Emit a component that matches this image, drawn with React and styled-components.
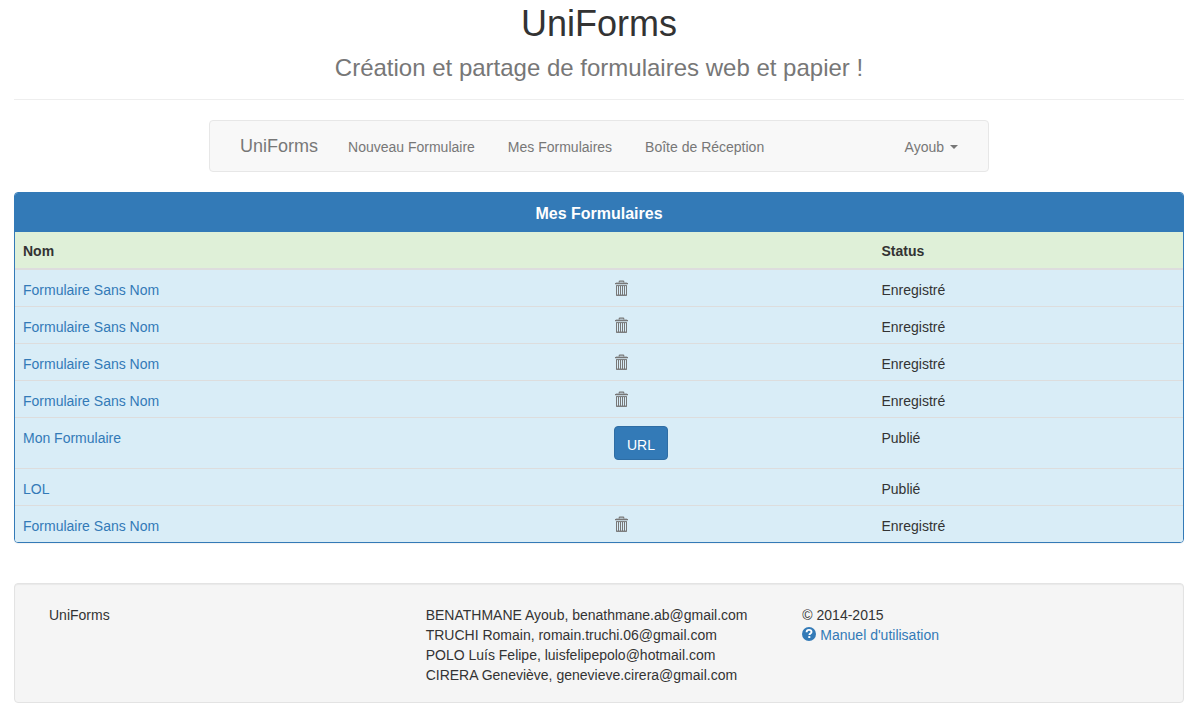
import React from "react";
import styled, { createGlobalStyle } from "styled-components";

const blue = "#337ab7";

const GlobalStyle = createGlobalStyle`
  *, *::before, *::after { box-sizing: border-box; }
  body {
    margin: 0;
    background: #fff;
    color: #333;
    font-family: "Liberation Sans", Arial, sans-serif;
    font-size: 14px;
    line-height: 20px;
  }
  button { font: inherit; cursor: pointer; }
`;

const Page = styled.div`
  padding: 4px 10px 0 14px;
`;

const Header = styled.header`
  display: flex;
  flex-direction: column;
  align-items: center;
  padding-bottom: 18px;
  margin-bottom: 20px;
  border-bottom: 1px solid #eee;
  text-align: center;
`;

const Title = styled.h1`
  margin: 0;
  font-size: 36px;
  line-height: 40px;
  font-weight: 500;
`;

const Subtitle = styled.p`
  margin: 11px 0 0;
  color: #777;
  font-size: 24px;
  line-height: 26px;
`;

const Navbar = styled.nav`
  display: flex;
  align-items: center;
  width: calc(100% * 2 / 3);
  min-height: 52px;
  margin: 0 auto 20px;
  padding: 0 15px;
  background: #f8f8f8;
  border: 1px solid #e7e7e7;
  border-radius: 4px;
`;

const Brand = styled.a`
  padding: 15px;
  color: #777;
  font-size: 18px;
  text-decoration: none;
`;

const NavLinks = styled.div`
  display: flex;
  flex: 1;
  gap: 3px;
`;

const NavLink = styled.a`
  padding: 16px 15px 14px;
  color: #777;
  text-decoration: none;
`;

const UserMenu = styled.button`
  display: flex;
  align-items: center;
  gap: 6px;
  padding: 16px 15px 14px;
  color: #777;
  background: none;
  border: 0;
`;

const Caret = styled.span`
  border-top: 4px solid #777;
  border-left: 4px solid transparent;
  border-right: 4px solid transparent;
`;

const Panel = styled.section`
  margin-bottom: 40px;
  overflow: hidden;
  border: 1px solid ${blue};
  border-radius: 4px;
  box-shadow: 0 1px 1px rgba(0, 0, 0, 0.05);
`;

const PanelTitle = styled.h2`
  margin: 0;
  padding: 11px 15px 9px;
  color: #fff;
  background: ${blue};
  font-size: 16px;
  line-height: 19px;
  font-weight: 700;
  text-align: center;
`;

const Table = styled.table`
  width: 100%;
  table-layout: fixed;
  border-collapse: separate;
  border-spacing: 0;
  background: #d9edf7;
`;

const HeadCell = styled.th`
  width: ${(p) => p.$width};
  padding: 9px 8px 7px;
  background: #dff0d8;
  border-bottom: 2px solid #ddd;
  text-align: left;
`;

const Cell = styled.td`
  height: 37px;
  padding: ${(p) => (p.$control ? "8px" : "10px 8px 6px")};
  border-top: 1px solid #ddd;
  vertical-align: top;
  tr:first-child > & { height: 36px; border-top: 0; }
`;

const Link = styled.a`
  color: ${blue};
  text-decoration: none;
`;

const UrlButton = styled.button`
  display: block;
  padding: 8px 12px 4px;
  color: #fff;
  background: ${blue};
  border: 1px solid #2e6da4;
  border-radius: 4px;
`;

const TrashButton = styled.button`
  display: flex;
  padding: 2px 0;
  color: #777;
  background: none;
  border: 0;
`;

const Footer = styled.footer`
  display: grid;
  grid-template-columns: repeat(3, 1fr);
  padding: 21px 19px 17px;
  background: #f5f5f5;
  border: 1px solid #e3e3e3;
  border-radius: 4px;
  box-shadow: inset 0 1px 1px rgba(0, 0, 0, 0.05);
`;

const FooterColumn = styled.div`
  padding: 0 15px;
`;

const HelpLink = styled(Link)`
  display: flex;
  gap: 4px;
`;

const TrashIcon = () => (
  <svg width="15" height="16" viewBox="0 0 15 16" fill="none" stroke="currentColor" aria-hidden="true">
    <path d="M5.2 2.6V1.9Q5.2 1.2 5.9 1.2h3.2q.7 0 .7.7v.7" strokeWidth="1.2" />
    <path d="M1 3.6h13" strokeWidth="1.3" />
    <path d="M2 2.9h11" strokeWidth=".6" />
    <path d="M2.2 5.6h10.6" strokeWidth="1" />
    <path d="M2.2 15.2h10.6" strokeWidth="1" />
    <path d="M2.5 5.5v9.8h10V5.5M4.5 6v9M6.5 6v9M8.5 6v9M10.5 6v9" strokeWidth="1" />
  </svg>
);

const HelpIcon = () => (
  <svg width="14" height="18" viewBox="0 0 14 18" fill="none" aria-hidden="true">
    <circle cx="7" cy="9" r="7" fill="currentColor" />
    <path d="M4.6 7.3C4.6 5.7 5.6 4.9 7 4.9s2.5.8 2.5 2c0 1.7-2.1 1.6-2.1 3.2" stroke="#fff" strokeWidth="1.9" />
    <path d="M6.3 11.1h2v1.9h-2z" fill="#fff" />
  </svg>
);

const forms = [
  { name: "Formulaire Sans Nom", status: "Enregistré" },
  { name: "Formulaire Sans Nom", status: "Enregistré" },
  { name: "Formulaire Sans Nom", status: "Enregistré" },
  { name: "Formulaire Sans Nom", status: "Enregistré" },
  { name: "Mon Formulaire", status: "Publié", url: true },
  { name: "LOL", status: "Publié" },
  { name: "Formulaire Sans Nom", status: "Enregistré" },
];

export default function App() {
  return (
    <>
      <GlobalStyle />
      <Page>
        <Header>
          <Title>UniForms</Title>
          <Subtitle>Création et partage de formulaires web et papier !</Subtitle>
        </Header>
        <Navbar>
          <Brand href="#">UniForms</Brand>
          <NavLinks>
            <NavLink href="#nouveau">Nouveau Formulaire</NavLink>
            <NavLink href="#formulaires">Mes Formulaires</NavLink>
            <NavLink href="#reception">Boîte de Réception</NavLink>
          </NavLinks>
          <UserMenu type="button" aria-haspopup="menu">
            Ayoub
            <Caret />
          </UserMenu>
        </Navbar>
        <Panel>
          <PanelTitle>Mes Formulaires</PanelTitle>
          <Table>
            <thead>
              <tr>
                <HeadCell scope="col" $width="50.6%">Nom</HeadCell>
                <HeadCell as="td" $width="22.9%" />
                <HeadCell scope="col" $width="26.5%">Status</HeadCell>
              </tr>
            </thead>
            <tbody>
              {forms.map((form, i) => (
                <tr key={i}>
                  <Cell><Link href={`#formulaire-${i + 1}`}>{form.name}</Link></Cell>
                  <Cell $control>
                    {form.url && <UrlButton type="button">URL</UrlButton>}
                    {form.status === "Enregistré" && (
                      <TrashButton type="button" aria-label="Supprimer"><TrashIcon /></TrashButton>
                    )}
                  </Cell>
                  <Cell>{form.status}</Cell>
                </tr>
              ))}
            </tbody>
          </Table>
        </Panel>
        <Footer>
          <FooterColumn>UniForms</FooterColumn>
          <FooterColumn>
            <div>BENATHMANE Ayoub, benathmane.ab@gmail.com</div>
            <div>TRUCHI Romain, romain.truchi.06@gmail.com</div>
            <div>POLO Luís Felipe, luisfelipepolo@hotmail.com</div>
            <div>CIRERA Geneviève, genevieve.cirera@gmail.com</div>
          </FooterColumn>
          <FooterColumn>
            <div>© 2014-2015</div>
            <HelpLink href="#manuel"><HelpIcon />Manuel d'utilisation</HelpLink>
          </FooterColumn>
        </Footer>
      </Page>
    </>
  );
}
